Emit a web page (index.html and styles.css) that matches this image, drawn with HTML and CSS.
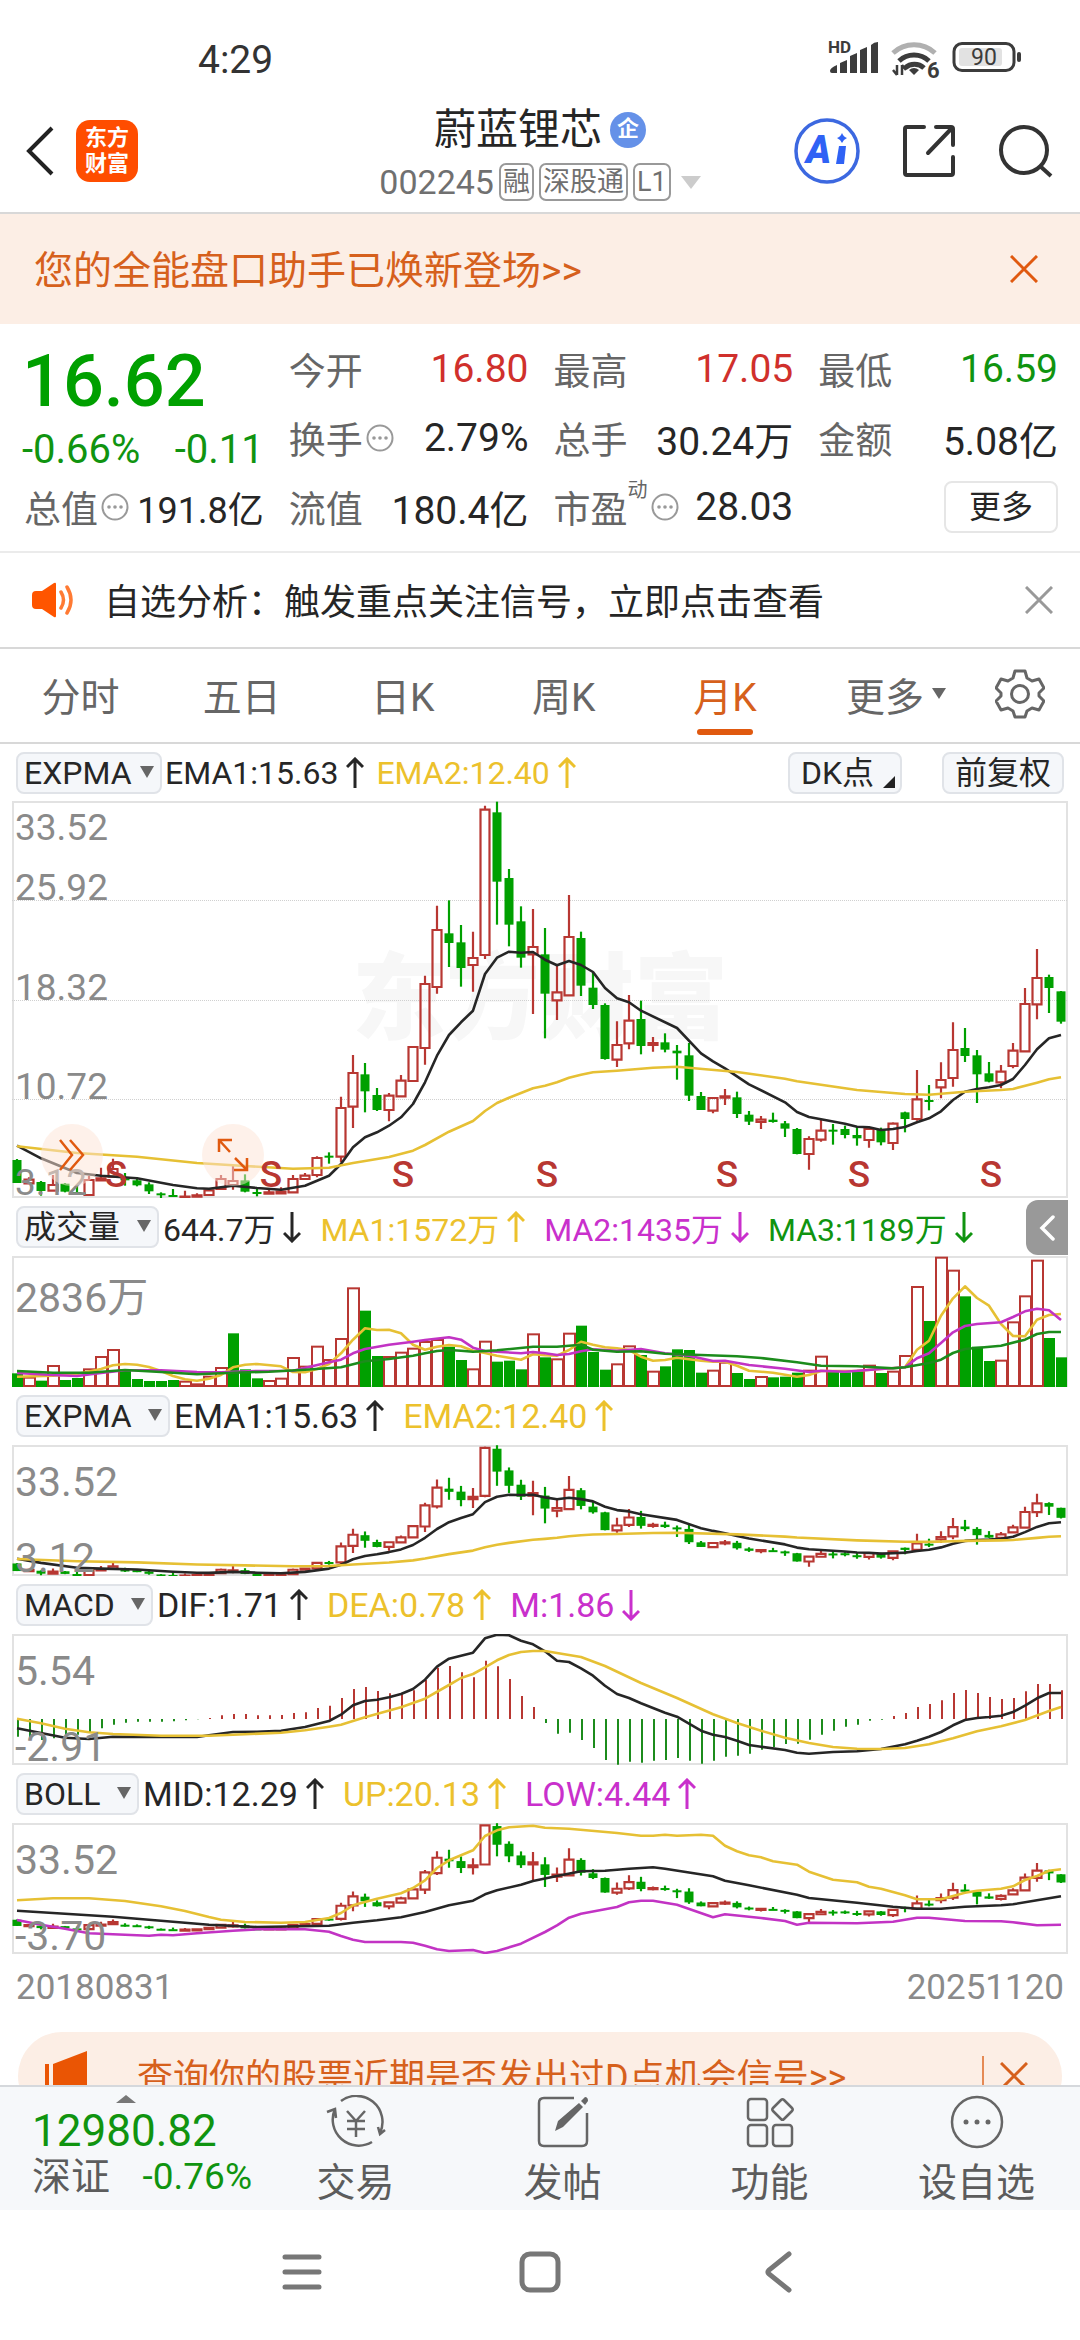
FILE: index.html
```html
<!DOCTYPE html>
<html lang="zh-CN">
<head>
<meta charset="utf-8">
<meta name="viewport" content="width=device-width, initial-scale=1">
<title>蔚蓝锂芯 002245</title>
<link rel="stylesheet" href="styles.css">
</head>
<body>
<svg class="defs" aria-hidden="true">
  <symbol id="up" viewBox="0 0 18 32"><path d="M9 31V2M1 10L9 2l8 8" fill="none" stroke="currentColor" stroke-width="3"/></symbol>
  <symbol id="down" viewBox="0 0 18 32"><path d="M9 1v29M1 22l8 8 8-8" fill="none" stroke="currentColor" stroke-width="3"/></symbol>
  <symbol id="cross" viewBox="0 0 28 28"><path d="M1 1l26 26M27 1L1 27" fill="none" stroke="currentColor" stroke-width="3"/></symbol>
  <symbol id="info" viewBox="0 0 28 28"><circle cx="14" cy="14" r="12.5" fill="none" stroke="currentColor" stroke-width="2"/><circle cx="8" cy="14" r="1.8" fill="currentColor"/><circle cx="14" cy="14" r="1.8" fill="currentColor"/><circle cx="20" cy="14" r="1.8" fill="currentColor"/></symbol>
</svg>

<div class="status">
  <span class="clock">4:29</span>
  <svg class="status-icons" viewBox="0 0 196 40" role="img" aria-label="HD 信号 WiFi6 电量">
    <text x="0" y="13" class="hd">HD</text>
    <path d="M2 31q0-3 7-6v8H4q-2 0-2-2zM12 23l7-3v13h-7zM22 16l7-3v20h-7zM32 10l7-3v26h-7zM43 5q3-3 7-3v31h-7z" fill="#3c3c3c"/>
    <g fill="none" stroke-width="5" stroke="#3c3c3c">
      <path d="M65 13a31 31 0 0 1 42 0" stroke="#b0b0b0"/>
      <path d="M71 21a22 22 0 0 1 30 0"/>
      <path d="M77 28a14 14 0 0 1 19 0"/>
    </g>
    <path d="M81 30q5-4 10 0l-5 5z" fill="#3c3c3c"/>
    <path d="M69 25v10M65 30l4 5M74 35V25M78 30l-4-5" stroke="#3c3c3c" stroke-width="2.5" fill="none"/>
    <text x="99" y="38" class="six">6</text>
    <rect x="126" y="3.5" width="60" height="27" rx="8" fill="none" stroke="#3c3c3c" stroke-width="3"/>
    <rect x="131" y="8" width="43" height="18" rx="3" fill="#e2e2e2"/>
    <path d="M191 14v6" stroke="#3c3c3c" stroke-width="4" stroke-linecap="round"/>
    <text x="156" y="25" class="pct">90</text>
  </svg>
</div>

<header class="header">
  <div class="side">
    <button class="icon-btn" aria-label="返回"><svg width="28" height="50" viewBox="0 0 28 50"><path d="M26 2L3 25l23 23" fill="none" stroke="#222" stroke-width="4"/></svg></button>
    <a class="logo" href="#">东方<br>财富</a>
  </div>
  <div class="heading">
    <h1 class="name">蔚蓝锂芯<span class="badge">企</span></h1>
    <div class="code">002245<span class="tag">融</span><span class="tag">深股通</span><span class="tag">L1</span><i class="caret pale"></i></div>
  </div>
  <div class="side end">
    <button class="icon-btn" aria-label="Ai"><svg width="66" height="66" viewBox="0 0 66 66"><circle cx="33" cy="33" r="31" fill="none" stroke="#3c68e0" stroke-width="3.5"/><text x="12" y="45" class="ai">A</text><path d="M45 28h7l-2 18h-8z" fill="#2f62f5"/><path d="M48 15q1.500 4 5 5-3.500 1.500-5 5-1.500-3.500-5-5 3.500-1 5-5z" fill="#2f62f5"/></svg></button>
    <button class="icon-btn" aria-label="分享"><svg width="54" height="54" viewBox="0 0 54 54"><path d="M22 3H5Q3 3 3 5v44q0 2 2 2h44q2 0 2-2V33M34 3h15q2 0 2 2v16M50 4L26 29" fill="none" stroke="#333" stroke-width="4" stroke-linecap="round"/></svg></button>
    <button class="icon-btn" aria-label="搜索"><svg width="56" height="56" viewBox="0 0 56 56"><circle cx="26" cy="27" r="23" fill="none" stroke="#333" stroke-width="4"/><path d="M42 43l11 10" stroke="#333" stroke-width="4"/></svg></button>
  </div>
</header>

<main class="content">
  <div class="banner">
    <a href="#">您的全能盘口助手已焕新登场&gt;&gt;</a>
    <button class="icon-btn" aria-label="关闭"><svg width="28" height="28"><use href="#cross"/></svg></button>
  </div>

  <section class="quote">
    <div class="price">
      <strong>16.62</strong>
      <div class="change"><span>-0.66%</span><span>-0.11</span></div>
    </div>
    <div class="stat"><span>今开</span><b class="red">16.80</b></div>
    <div class="stat"><span>最高</span><b class="red">17.05</b></div>
    <div class="stat"><span>最低</span><b class="green">16.59</b></div>
    <div class="stat"><span>换手<svg class="info"><use href="#info"/></svg></span><b>2.79%</b></div>
    <div class="stat"><span>总手</span><b>30.24万</b></div>
    <div class="stat"><span>金额</span><b>5.08亿</b></div>
    <div class="stat"><span>总值<svg class="info"><use href="#info"/></svg></span><b class="fit">191.8亿</b></div>
    <div class="stat"><span>流值</span><b>180.4亿</b></div>
    <div class="stat"><span>市盈<sup>动</sup><svg class="info"><use href="#info"/></svg></span><b>28.03</b></div>
    <div class="stat more"><button>更多</button></div>
  </section>

  <div class="notice">
    <svg width="42" height="36" viewBox="0 0 42 36"><path d="M0 13q0-4 4-4h6L22 1q2-1 2 1v32q0 2-2 1L10 27H4q-4 0-4-4z" fill="#ff5500"/><path d="M29 10q5 8 0 16M35 5q8 13 0 26" fill="none" stroke="#ff7a33" stroke-width="3.500" stroke-linecap="round"/></svg>
    <a href="#">自选分析：触发重点关注信号，立即点击查看</a>
    <button class="icon-btn" aria-label="关闭"><svg width="28" height="28"><use href="#cross"/></svg></button>
  </div>

  <nav class="tabs">
    <button>分时</button>
    <button>五日</button>
    <button>日K</button>
    <button>周K</button>
    <button class="active">月K</button>
    <button class="drop">更多<i class="caret small"></i></button>
    <button class="gear" aria-label="设置"><svg width="50" height="50" viewBox="0 0 50 50"><path d="M20 2h10l2 7 5 3 7-2 5 9-5 5v3l5 5-5 9-7-2-5 3-2 6H20l-2-6-5-3-7 2-5-9 5-5v-3l-5-5 5-9 7 2 5-3z" fill="none" stroke="#666" stroke-width="3" stroke-linejoin="round"/><circle cx="25" cy="25" r="8.500" fill="none" stroke="#666" stroke-width="3"/></svg></button>
  </nav>

  <div class="legend tight">
    <label class="picker"><select aria-label="主图指标"><option>EXPMA</option></select></label>
    <span class="val">EMA1:15.63<svg><use href="#up"/></svg></span>
    <span class="val gold">EMA2:12.40<svg><use href="#up"/></svg></span>
    <span class="tools"><button class="chip corner">DK点</button><button class="chip">前复权</button></span>
  </div>
  <div class="chart">
    <div class="watermark" aria-hidden="true">东方财富</div>
    <svg id="main" viewBox="0 0 1056 397"></svg>
    <button class="float expand" aria-label="展开"><svg width="28" height="34" viewBox="0 0 28 34"><path d="M2 2l12 15L2 32M12 2l13 15-13 15" fill="none" stroke="#e0590f" stroke-width="2.500"/></svg></button>
    <button class="float full" aria-label="全屏"><svg width="32" height="34" viewBox="0 0 32 34"><path d="M2 14V2h13M2 2l11 12M30 20v12H17M30 32L18 20" fill="none" stroke="#e0590f" stroke-width="2.500"/></svg></button>
  </div>

  <div class="legend volume">
    <label class="picker"><select aria-label="副图一"><option>成交量</option></select></label>
    <span class="val">644.7万<svg><use href="#down"/></svg></span>
    <span class="val gold">MA1:1572万<svg><use href="#up"/></svg></span>
    <span class="val purple">MA2:1435万<svg><use href="#down"/></svg></span>
    <span class="val green">MA3:1189万<svg><use href="#down"/></svg></span>
    <button class="drawer" aria-label="展开侧栏"><svg width="16" height="26" viewBox="0 0 16 26"><path d="M14 2L3 13l11 11" fill="none" stroke="#fff" stroke-width="3.500" stroke-linecap="round"/></svg></button>
  </div>
  <div class="chart"><svg id="volume" viewBox="0 0 1056 131"></svg></div>

  <div class="legend">
    <label class="picker"><select aria-label="副图二"><option>EXPMA</option></select></label>
    <span class="val">EMA1:15.63<svg><use href="#up"/></svg></span>
    <span class="val gold">EMA2:12.40<svg><use href="#up"/></svg></span>
  </div>
  <div class="chart"><svg id="expma" viewBox="0 0 1056 131"></svg></div>

  <div class="legend">
    <label class="picker"><select aria-label="副图三"><option>MACD</option></select></label>
    <span class="val">DIF:1.71<svg><use href="#up"/></svg></span>
    <span class="val gold">DEA:0.78<svg><use href="#up"/></svg></span>
    <span class="val purple">M:1.86<svg><use href="#down"/></svg></span>
  </div>
  <div class="chart"><svg id="macd" viewBox="0 0 1056 131"></svg></div>

  <div class="legend">
    <label class="picker"><select aria-label="副图四"><option>BOLL</option></select></label>
    <span class="val">MID:12.29<svg><use href="#up"/></svg></span>
    <span class="val gold">UP:20.13<svg><use href="#up"/></svg></span>
    <span class="val purple">LOW:4.44<svg><use href="#up"/></svg></span>
  </div>
  <div class="chart"><svg id="boll" viewBox="0 0 1056 131"></svg></div>

  <div class="dates"><time>20180831</time><time>20251120</time></div>

  <div class="promo">
    <svg width="42" height="50" viewBox="0 0 42 50"><path d="M0 13h4v24H0zM8 13L42 0v50L8 38z" fill="#ea5504"/></svg>
    <a href="#">查询你的股票近期是否发出过D点机会信号&gt;&gt;</a>
    <i class="bar"></i>
    <button class="icon-btn" aria-label="关闭"><svg width="28" height="28"><use href="#cross"/></svg></button>
  </div>
</main>

<footer class="dock">
  <a class="index" href="#">
    <i class="caret up"></i>
    <span class="points">12980.82</span>
    <span class="line"><span>深证</span><span class="green">-0.76%</span></span>
  </a>
  <a class="item" href="#"><svg width="60" height="54" viewBox="0 0 60 54"><g fill="none" stroke="#666" stroke-width="2.500"><path d="M15 6a26 26 0 0 1 39 32M46 47A26 26 0 0 1 9 14M1 17l8-3 1 9M59 35l-5 4-2-7M21 16l9 10 9-10M30 26v16M21 26h18M21 34h18"/></g></svg>交易</a>
  <a class="item" href="#"><svg width="54" height="54" viewBox="0 0 54 54"><path d="M38 3H8q-5 0-5 5v38q0 5 5 5h38q5 0 5-5V18" fill="none" stroke="#666" stroke-width="2.500"/><path d="M19 36l3-10L43 8l4 4-20 20zM45 6l4-4q3 0 3 4l-3 4z" fill="#666"/></svg>发帖</a>
  <a class="item" href="#"><svg width="50" height="54" viewBox="0 0 50 54"><g fill="none" stroke="#666" stroke-width="2.500"><rect x="3" y="4" width="19" height="21" rx="3"/><rect x="3" y="30" width="19" height="21" rx="3"/><rect x="28" y="30" width="19" height="21" rx="3"/><path d="M36 5q1.500-1.500 3 0l8 8q1.500 1.500 0 3l-8 8q-1.500 1.500-3 0l-8-8q-1.500-1.500 0-3z"/></g></svg>功能</a>
  <a class="item" href="#"><svg width="54" height="54" viewBox="0 0 54 54"><circle cx="27" cy="27" r="25" fill="none" stroke="#666" stroke-width="2.500"/><g fill="#666"><circle cx="16" cy="27" r="2.500"/><circle cx="27" cy="27" r="2.500"/><circle cx="38" cy="27" r="2.500"/></g></svg>设自选</a>
</footer>

<nav class="sysnav">
  <button class="icon-btn" aria-label="最近任务"><svg width="40" height="40" viewBox="0 0 40 40"><path d="M3 5h34M3 20h34M3 35h34" stroke="#777" stroke-width="5" stroke-linecap="round"/></svg></button>
  <button class="icon-btn" aria-label="主页"><svg width="42" height="42" viewBox="0 0 42 42"><rect x="3" y="3" width="36" height="36" rx="8" fill="none" stroke="#777" stroke-width="5"/></svg></button>
  <button class="icon-btn" aria-label="返回"><svg width="28" height="42" viewBox="0 0 28 42"><path d="M25 3L5 19q-2 2 0 4l20 16" fill="none" stroke="#777" stroke-width="5" stroke-linecap="round"/></svg></button>
</nav>
<script src="chart.js"></script>
</body>
</html>
```
FILE: styles.css
```css
* { box-sizing: border-box; }
body {
  margin: 0;
  height: 100vh;
  display: flex;
  flex-direction: column;
  background: #fff;
  color: #262626;
  font-family: Roboto, "Noto Sans CJK SC", sans-serif;
  font-size: 32px;
  overflow: hidden;
}
a { color: inherit; text-decoration: none; }
button, select {
  margin: 0;
  padding: 0;
  border: 0;
  background: none;
  color: inherit;
  font: inherit;
}
svg { display: block; flex: none; }
.defs { position: absolute; width: 0; height: 0; }
.icon-btn { display: flex; align-items: center; justify-content: center; }
.red { color: #d0302c; }
.green { color: #109410; }
.gold { color: #ecc12c; }
.purple { color: #c930cc; }

.caret {
  display: inline-block;
  border: 7px solid transparent;
  border-top: 12px solid #666;
  border-bottom-width: 0;
}
.caret.pale { border-width: 13px 10px 0; border-top-color: #ccc; }
.caret.small { border-width: 11px 7px 0; }
.caret.up { border-width: 0 10px 8px; border-bottom-color: #777; }

/* status bar */
.status {
  flex: none;
  display: flex;
  justify-content: space-between;
  align-items: center;
  height: 90px;
  padding: 30px 56px 0 198px;
}
.clock { font-size: 39px; color: #333; }
.status-icons { width: 196px; height: 40px; overflow: visible; }
.hd { font: 700 17px Roboto, sans-serif; fill: #3c3c3c; }
.six { font: 700 22px Roboto, sans-serif; fill: #3c3c3c; }
.pct { font: 400 23px Roboto, sans-serif; fill: #3c3c3c; text-anchor: middle; }

/* header */
.header {
  flex: none;
  display: grid;
  grid-template-columns: 1fr auto 1fr;
  align-items: center;
  height: 124px;
  padding: 0 26px;
  border-bottom: 2px solid #d8d8d8;
}
.side { display: flex; align-items: center; gap: 22px; }
.side.end { justify-content: flex-end; gap: 42px; }
.logo {
  display: flex;
  align-items: center;
  justify-content: center;
  width: 62px;
  height: 62px;
  border-radius: 14px;
  background: #ff4d00;
  color: #fff;
  font-size: 22px;
  font-weight: 700;
  line-height: 26px;
}
.heading {
  display: flex;
  flex-direction: column;
  align-items: center;
  padding-top: 8px;
}
.name {
  display: flex;
  align-items: center;
  gap: 8px;
  margin: 0;
  font-size: 42px;
  font-weight: 400;
  line-height: 54px;
}
.badge {
  width: 36px;
  height: 36px;
  border-radius: 50%;
  background: #6591e8;
  color: #fff;
  font-size: 22px;
  font-weight: 700;
  line-height: 34px;
  text-align: center;
}
.code {
  display: flex;
  align-items: center;
  gap: 5px;
  color: #707070;
  font-size: 34px;
  line-height: 50px;
}
.tag {
  height: 38px;
  padding: 0 2px;
  border: 2px solid #999;
  border-radius: 7px;
  font-size: 27px;
  line-height: 34px;
}
.code .caret { margin-left: 5px; }
.ai { font: 900 38px Roboto, sans-serif; font-style: italic; fill: #2f62f5; }

/* scrolling content */
.content {
  flex: 1;
  min-height: 0;
  overflow: hidden;
}
.banner {
  display: flex;
  align-items: center;
  justify-content: space-between;
  height: 110px;
  padding: 0 42px 0 34px;
  background: #fceee5;
  color: #d6601c;
  font-size: 39px;
}
.banner a { padding-bottom: 5px; }
.banner .icon-btn { color: #e0590f; }

.quote {
  display: grid;
  grid-template-columns: repeat(4, 1fr);
  grid-auto-rows: 69px;
  column-gap: 25px;
  padding: 10px 22px 10px 24px;
  border-bottom: 2px solid #ebebeb;
}
.price {
  grid-row: span 2;
  display: flex;
  flex-direction: column;
  margin-left: -2px;
  color: #00a000;
}
.price strong { font-size: 72px; font-weight: 500; line-height: 96px; }
.change {
  display: flex;
  justify-content: space-between;
  color: #109410;
  font-size: 40px;
  line-height: 40px;
}
.stat {
  display: flex;
  align-items: center;
  justify-content: space-between;
  color: #666;
  font-size: 37px;
  white-space: nowrap;
}
.stat span { display: flex; align-items: center; }
.stat b { color: #262626; font-size: 39px; font-weight: 400; }
.stat b.fit { font-size: 36px; }
.stat b.red { color: #d0302c; }
.stat b.green { color: #109410; }
.stat sup { align-self: flex-start; font-size: 20px; line-height: 20px; }
.info { width: 28px; height: 28px; margin-left: 3px; color: #999; }
.stat.more { justify-content: flex-end; }
.more button {
  width: 114px;
  height: 52px;
  border: 2px solid #e6e6e6;
  border-radius: 8px;
  color: #262626;
  font-size: 32px;
  line-height: 46px;
}

.notice {
  display: flex;
  align-items: center;
  height: 96px;
  padding: 0 27px 0 32px;
  border-bottom: 2px solid #d8d8d8;
  font-size: 36px;
}
.notice a { flex: 1; margin-left: 30px; padding-bottom: 3px; }
.notice .icon-btn { color: #999; }

.tabs {
  display: grid;
  grid-template-columns: repeat(6, 3fr) 2fr;
  height: 95px;
  padding-right: 6px;
  border-bottom: 2px solid #d8d8d8;
  color: #666;
  font-size: 39px;
}
.tabs button {
  display: flex;
  align-items: center;
  justify-content: center;
  position: relative;
  padding-bottom: 4px;
}
.tabs .drop { gap: 8px; padding-left: 20px; }
.tabs .active { color: #d6601c; }
.tabs .active::after {
  content: "";
  position: absolute;
  bottom: 7px;
  width: 56px;
  height: 6px;
  border-radius: 3px;
  background: #e0590f;
}

/* indicator legends */
.legend {
  display: flex;
  align-items: center;
  gap: 19px;
  height: 58px;
  padding: 0 16px;
  font-size: 34px;
  white-space: nowrap;
}
.legend.tight { height: 57px; gap: 12px; font-size: 32px; }
.picker { position: relative; display: flex; margin-right: -15px; }
.tight .picker { margin-right: -9px; }
.picker select {
  appearance: none;
  height: 42px;
  padding: 0 36px 0 6px;
  border: 2px solid #e0e3e8;
  border-radius: 8px;
  background: #f5f7fa;
  font-size: 32px;
  line-height: 38px;
}
.tight .picker select { padding-right: 28px; }
.picker::after {
  content: "";
  position: absolute;
  right: 8px;
  top: 14px;
  border: 7px solid transparent;
  border-top: 12px solid #666;
  border-bottom: 0;
  pointer-events: none;
}
.val { display: flex; align-items: center; gap: 8px; }
.val svg { width: 18px; height: 32px; }
.legend.volume { padding-right: 12px; font-size: 32px; }
.tools { display: flex; gap: 40px; margin-left: auto; }
.chip {
  position: relative;
  height: 42px;
  padding: 0 11px;
  border: 2px solid #e0e3e8;
  border-radius: 8px;
  background: #f5f7fa;
  font-size: 32px;
  line-height: 36px;
}
.chip.corner { padding-right: 26px; }
.chip.corner::after {
  content: "";
  position: absolute;
  right: 5px;
  bottom: 4px;
  border: 6px solid #222;
  border-top-color: transparent;
  border-left-color: transparent;
}
.drawer {
  display: flex;
  align-items: center;
  justify-content: center;
  align-self: stretch;
  width: 42px;
  margin: 2px 0 1px auto;
  border-radius: 12px 0 0 12px;
  background: #999;
}

/* charts */
.chart { position: relative; margin: 0 12px; }
.chart > svg { position: relative; width: 100%; height: auto; }
.chart text { font-family: Roboto, "Noto Sans CJK SC", sans-serif; }
.axis { fill: #8a8a8a; font-size: 37px; }
.axis.sub { font-size: 41px; }
.sell { fill: #b83732; font-size: 37px; font-weight: 500; text-anchor: middle; }
.watermark {
  position: absolute;
  top: 50%;
  left: 50%;
  transform: translate(-50%, -50%);
  color: #f7f7f7;
  font-size: 94px;
  font-weight: 900;
  line-height: 100px;
  white-space: nowrap;
}
.float {
  position: absolute;
  bottom: 12px;
  display: flex;
  align-items: center;
  justify-content: center;
  width: 62px;
  height: 62px;
  border-radius: 50%;
  background: rgba(253, 228, 214, 0.5);
}
.float.expand { left: 29px; }
.float.full { left: 190px; }

.dates {
  display: flex;
  justify-content: space-between;
  height: 78px;
  padding: 0 16px;
  color: #8a8a8a;
  font-size: 35px;
  line-height: 68px;
}
.promo {
  display: flex;
  align-items: center;
  height: 88px;
  margin: 0 18px;
  padding: 0 34px 0 27px;
  border-radius: 44px;
  background: #fceee5;
  color: #d6601c;
  font-size: 36px;
}
.promo a { flex: 1; margin-left: 50px; padding-bottom: 4px; }
.bar { width: 2px; height: 40px; margin-right: 16px; background: #e58a55; }

/* bottom bar */
.dock {
  flex: none;
  display: flex;
  height: 125px;
  border-top: 2px solid #d5d8dc;
  background: #f6f8fa;
  color: #5c5c5c;
  font-size: 39px;
}
.index {
  display: flex;
  flex-direction: column;
  width: 252px;
  padding: 8px 0 0 32px;
}
.index .caret { align-self: center; margin-right: 32px; }
.points { color: #109410; font-size: 44px; line-height: 56px; }
.line { display: flex; align-items: center; justify-content: space-between; line-height: 36px; }
.line .green { font-size: 37px; }
.item {
  flex: 1;
  display: flex;
  flex-direction: column;
  align-items: center;
  gap: 10px;
  padding-top: 8px;
  line-height: 48px;
}
.sysnav {
  flex: none;
  display: grid;
  grid-template-columns: repeat(3, 22%);
  justify-content: center;
  height: 130px;
  padding-bottom: 6px;
}
```
FILE: chart.js
```js
const RED = '#b83732', GREEN = '#00a000', BLACK = '#262626', GOLD = '#e6c034', PURPLE = '#c233c4', FRAME = '#e2e2e2';

// Monthly candles: colour, then high / body top / body bottom / low.
// Levels run downward: 36 is 33.52 yuan, 1227 is 3.12 yuan.
const candles = `
G1110,1113,1182,1182 R1165,1172,1183,1186 G1176,1179,1206,1220 R1158,1188,1205,1208 G1182,1184,1208,1210
G1190,1209,1214,1214 R1160,1173,1218,1218 R1136,1168,1174,1176 R1109,1140,1163,1165 G1152,1168,1174,1190
G1165,1174,1189,1192 G1180,1186,1207,1215 G1210,1213,1217,1228 G1200,1218,1223,1223 R1205,1223,1226,1227
R1213,1219,1223,1225 R1200,1204,1218,1220 R1158,1170,1200,1203 R1128,1176,1188,1202 G1156,1174,1208,1210
G1200,1209,1213,1222 R1200,1210,1214,1217 R1195,1208,1213,1216 R1158,1170,1210,1213 R1152,1160,1170,1173
R1102,1107,1158,1165 G1090,1100,1104,1124 R923,957,1103,1120 R798,852,953,1017 G822,856,907,970
G897,918,963,966 R912,920,963,997 R858,875,922,922 R773,774,876,878 R560,585,777,827
R350,423,594,614 G334,433,462,534 G408,460,537,593 R428,507,528,608 R50,62,498,510
G38,70,278,407 G240,267,407,472 G352,397,506,536 R360,474,496,675 G417,496,614,748
R530,610,634,693 R318,444,619,622 G428,447,590,621 G550,596,648,660 G643,648,810,812
R697,768,812,834 R618,695,763,781 G635,690,771,796 R744,762,768,788 G733,760,782,790
G768,785,793,872 G762,799,920,936 G909,921,963,963 R924,927,965,973 R900,922,926,948
G908,925,975,987 G966,977,998,1008 R981,992,999,1020 G971,992,999,1001 G996,1003,1019,1044
G1017,1020,1095,1096 R1042,1050,1095,1142 R993,1025,1052,1058 G1005,1022,1026,1067 G1010,1020,1038,1048
G1014,1038,1048,1070 R1014,1020,1053,1076 G1016,1020,1060,1069 R1000,1004,1062,1083 G968,970,990,1030
R843,931,990,995 G888,933,939,964 R820,873,895,928 R700,783,867,893 G717,777,801,819
G783,799,856,942 G819,853,878,880 R828,848,880,898 R762,785,831,838 R597,645,787,788
R480,567,646,691 G557,564,597,672 G606,607,698,704`.trim().split(/\s+/)
  .map(s => ({ up: s[0] === 'R', v: s.slice(1).split(',').map(Number) }));

// Volume bars: colour and level, 171 is 28.36 million and 562 is zero.
const volumes = `G523 R533 G545 R498 G543 G537 R508 R471 R450 G511 G540 G546 G546 G543 R545 R553 R530 R504 G403 G511
G538 R543 R536 R474 R500 R440 R480 R417 R265 G335 G471 R471 R458 R446 R426 R420 G443 G483 R508 R425
G488 G485 G511 R403 G475 R478 R401 G380 G459 G512 R493 R439 G468 R515 G502 G451 G453 G521 R512 R488
G522 G540 R531 G535 G533 G521 R512 R470 G515 G520 G516 R497 G522 R515 R468 R261 G366 R173 R212 G292
G443 G486 R482 R367 R289 R182 G417 G475`.split(/\s+/);

// MACD columns: level, 389 is zero.
const columns = `443 446 453 448 445 437 430 418 407 401 398 398 398 397 394 391 387 379 375 375 379 379 378 372 370 357 350 327 300 294
306 313 316 304 273 236 231 250 265 215 232 270 321 354 402 434 431 453 477 513 527 518 521 515 513 507 515 524 515 503
500 494 482 474 465 464 452 437 425 413 407 395 392 381 372 354 345 334 312 303 312 324 330 327 307 285 285 304`.split(/\s+/).map(Number);

const ema1 = '0:1070 2:1108 5:1152 7:1160 10:1168 13:1188 15:1198 16:1199 18:1190 20:1197 22:1202 24:1190 26:1160 27:1125 28:1075 29:1045 30:1030 31:1010 32:985 33:945 34:880 35:800 36:738 37:700 38:665 39:555 40:506 41:488 42:491 43:489 44:512 45:529 46:516 47:528 48:549 49:597 50:628 51:640 52:665 55:717 57:793 58:817 59:838 60:862 61:886 64:940 65:969 66:984 67:991 69:1004 70:1013 71:1015 72:1023 73:1020 74:1014 75:1000 76:988 77:967 78:933 79:908 80:900 81:895 82:888 83:870 84:828 85:781 86:748 87:738';
const ema2 = '0:1072 5:1092 10:1103 15:1122 19:1131 23:1139 26:1136 28:1122 31:1104 33:1085 34:1068 36:1028 38:996 39:966 40:942 41:926 43:898 44:890 45:880 46:866 47:857 48:850 50:845 53:836 55:833 60:849 64:869 65:877 70:903 74:915 76:917 78:911 79:908 82:903 83:900 85:881 86:871 87:865';
const ma1 = '0:533 3:530 5:525 7:510 8:499 9:495 10:497 11:504 12:516 13:531 14:541 15:545 16:539 17:528 18:505 19:497 20:495 22:502 23:519 24:520 25:510 26:495 27:463 28:422 29:388 30:393 31:392 32:403 33:437 34:452 35:443 36:438 37:442 38:455 39:462 40:470 41:476 42:482 43:466 44:469 45:470 46:453 47:428 48:437 49:445 50:448 51:453 52:473 53:485 54:483 55:476 57:485 58:488 59:488 60:500 61:515 63:521 65:533 66:528 67:516 70:515 72:510 74:505 75:452 76:425 77:350 78:298 79:262 80:297 81:320 82:375 83:411 84:412 85:362 86:348 87:345';
const ma2 = '0:522 3:528 5:531 7:522 9:514 12:514 15:519 17:520 20:516 23:515 26:490 27:482 28:463 29:450 31:437 33:428 34:423 36:415 37:422 38:446 39:456 40:458 42:463 43:459 44:463 45:468 46:465 47:457 48:451 50:455 52:450 54:463 56:470 58:486 59:485 61:498 64:509 66:519 67:515 69:518 72:510 74:505 75:478 76:463 77:432 78:400 79:381 80:375 82:370 83:354 84:337 85:329 86:334 87:363';
const ma3 = '0:516 3:521 6:521 9:513 12:519 15:526 18:521 21:518 24:512 27:505 29:487 31:480 33:470 34:463 35:456 36:453 37:455 38:458 40:454 43:443 45:443 47:437 48:452 50:458 52:457 54:464 57:468 60:472 62:477 65:490 67:500 70:502 73:508 74:505 76:492 77:482 78:462 79:450 82:440 84:422 85:405 86:399 87:399';
const dif = '0:418 2:432 4:446 6:450 8:443 12:444 15:444 16:439 18:429 20:428 22:425 24:414 26:396 27:377 28:349 29:336 30:332 31:325 32:315 33:300 34:272 35:233 36:209 37:200 38:191 39:148 40:137 41:139 42:155 43:166 44:187 45:215 46:219 47:238 48:260 49:290 50:315 51:327 52:343 54:371 55:383 57:425 58:437 59:444 60:455 61:468 62:473 64:483 65:491 66:494 68:489 70:487 72:480 74:466 75:455 76:443 77:429 78:409 79:393 80:387 81:384 82:380 83:369 84:350 85:328 86:312 87:312';
const dea = '0:389 2:403 4:419 6:430 8:435 12:440 16:440 19:436 22:431 24:424 26:413 27:407 29:385 32:355 34:329 36:288 37:267 38:255 39:235 40:214 41:198 42:189 43:186 44:186 47:204 49:231 52:282 55:327 58:376 60:402 62:425 64:446 66:462 68:474 70:479 72:480 74:477 76:466 78:448 80:427 82:412 84:393 86:366 87:354';
const upper = '0:935 3:929 6:929 9:937 12:953 14:967 16:985 17:993 19:1000 22:1002 24:1000 26:988 27:973 28:950 30:930 32:914 33:898 34:875 35:838 36:815 37:800 38:785 39:742 40:725 41:716 43:711 44:717 46:720 50:733 52:741 53:741 54:738 55:741 57:738 58:741 59:771 60:788 61:800 62:806 63:818 65:828 66:849 68:873 70:881 71:894 72:900 74:920 75:932 77:932 79:912 80:906 82:900 83:893 84:874 85:862 86:846 87:842';
const middle = '0:966 4:975 8:984 12:996 16:1008 20:1015 26:1011 28:1002 30:995 32:986 34:970 36:950 38:936 39:917 40:905 42:888 43:877 45:862 47:848 49:846 51:840 53:836 54:840 58:863 59:876 61:890 65:918 66:928 70:942 73:954 75:960 77:960 79:954 82:950 83:947 85:935 86:929 87:923';
const lower = '0:994 2:1008 4:1020 6:1034 9:1038 11:1041 12:1038 13:1040 15:1034 18:1026 20:1022 24:1022 26:1029 27:1042 28:1053 29:1060 32:1060 33:1062 34:1071 35:1082 36:1087 38:1084 39:1093 40:1087 42:1065 44:1030 45:1010 46:987 47:975 49:962 50:955 51:941 52:936 53:936 55:948 58:986 59:977 62:988 64:997 65:1008 66:1002 70:1004 73:999 75:987 76:987 79:997 82:998 83:1001 85:1010 87:1008';

const x = i => 5 + 12 * i;

function line(data, top, scale, color) {
  const points = data.split(' ').map(p => {
    const [i, y] = p.split(':').map(Number);
    return x(i) + ',' + ((y - top) * scale).toFixed(1);
  }).join(' ');
  return `<polyline points="${points}" fill="none" stroke="${color}" stroke-width="2.6" stroke-linejoin="round"/>`;
}

function drawCandles(scale) {
  return candles.map((c, i) => {
    const [high, top, bottom, low] = c.v.map(v => (v - 36) * scale);
    if (c.up) {
      const h = Math.max(bottom - top, 1);
      return `<path d="M${x(i)} ${high}V${top}M${x(i)} ${top + h}V${low}M${x(i) - 4.5} ${top}h9v${h}h-9z" fill="none" stroke="${RED}" stroke-width="2.2"/>`;
    }
    const h = Math.max(bottom - top, 2);
    return `<path d="M${x(i)} ${high}V${low}" stroke="${GREEN}" stroke-width="2.2"/><rect x="${x(i) - 4.5}" y="${top}" width="9" height="${h}" fill="${GREEN}"/>`;
  }).join('');
}

function frame(height) {
  return `<rect x="1" y="1" width="1054" height="${height - 2}" fill="none" stroke="${FRAME}" stroke-width="2"/>`;
}

function label(text, y, sub) {
  return `<text class="axis${sub ? ' sub' : ''}" x="3" y="${y}">${text}</text>`;
}

function render(id, parts) {
  document.getElementById(id).innerHTML = parts.join('');
}

render('main', [
  frame(397),
  [99, 199, 298].map(y => `<path d="M0 ${y}.5H1056" stroke="#d0d0d0" stroke-dasharray="1 1"/>`).join(''),
  drawCandles(1 / 3),
  line(ema1, 36, 1 / 3, BLACK),
  line(ema2, 36, 1 / 3, GOLD),
  label('33.52', 39), label('25.92', 99), label('18.32', 199), label('10.72', 298), label('3.12', 394),
  [104, 259, 391, 535, 715, 847, 979].map(p => `<text class="sell" x="${p}" y="386">S</text>`).join('')
]);

render('volume', [
  frame(131),
  volumes.map((s, i) => {
    const y = (Number(s.slice(1)) - 171) / 3;
    return s[0] === 'R'
      ? `<rect x="${x(i) - 5}" y="${y + 1}" width="11" height="${129 - y}" fill="#fff" stroke="${RED}" stroke-width="2"/>`
      : `<rect x="${x(i) - 5}" y="${y}" width="11" height="${131 - y}" fill="${GREEN}"/>`;
  }).join(''),
  line(ma1, 171, 1 / 3, GOLD),
  line(ma2, 171, 1 / 3, PURPLE),
  line(ma3, 171, 1 / 3, '#1c8c1c'),
  label('2836万', 56, true)
]);

render('expma', [
  frame(131),
  drawCandles(131 / 1191),
  line(ema1, 36, 131 / 1191, BLACK),
  line(ema2, 36, 131 / 1191, GOLD),
  label('33.52', 51, true), label('3.12', 127, true)
]);

render('macd', [
  frame(131),
  columns.map((v, i) => `<path d="M${x(i) + 1} 85V${(v - 135) / 3}" stroke="${v > 389 ? '#1c8c1c' : RED}" stroke-width="2"/>`).join(''),
  line(dif, 135, 1 / 3, BLACK),
  line(dea, 135, 1 / 3, GOLD),
  label('5.54', 51, true), label('-2.91', 127, true)
]);

render('boll', [
  frame(131),
  drawCandles(131 / 1191 * 30.4 / 37.22),
  line(upper, 703, 1 / 3, GOLD),
  line(middle, 703, 1 / 3, BLACK),
  line(lower, 703, 1 / 3, PURPLE),
  label('33.52', 51, true), label('-3.70', 127, true)
]);
```
